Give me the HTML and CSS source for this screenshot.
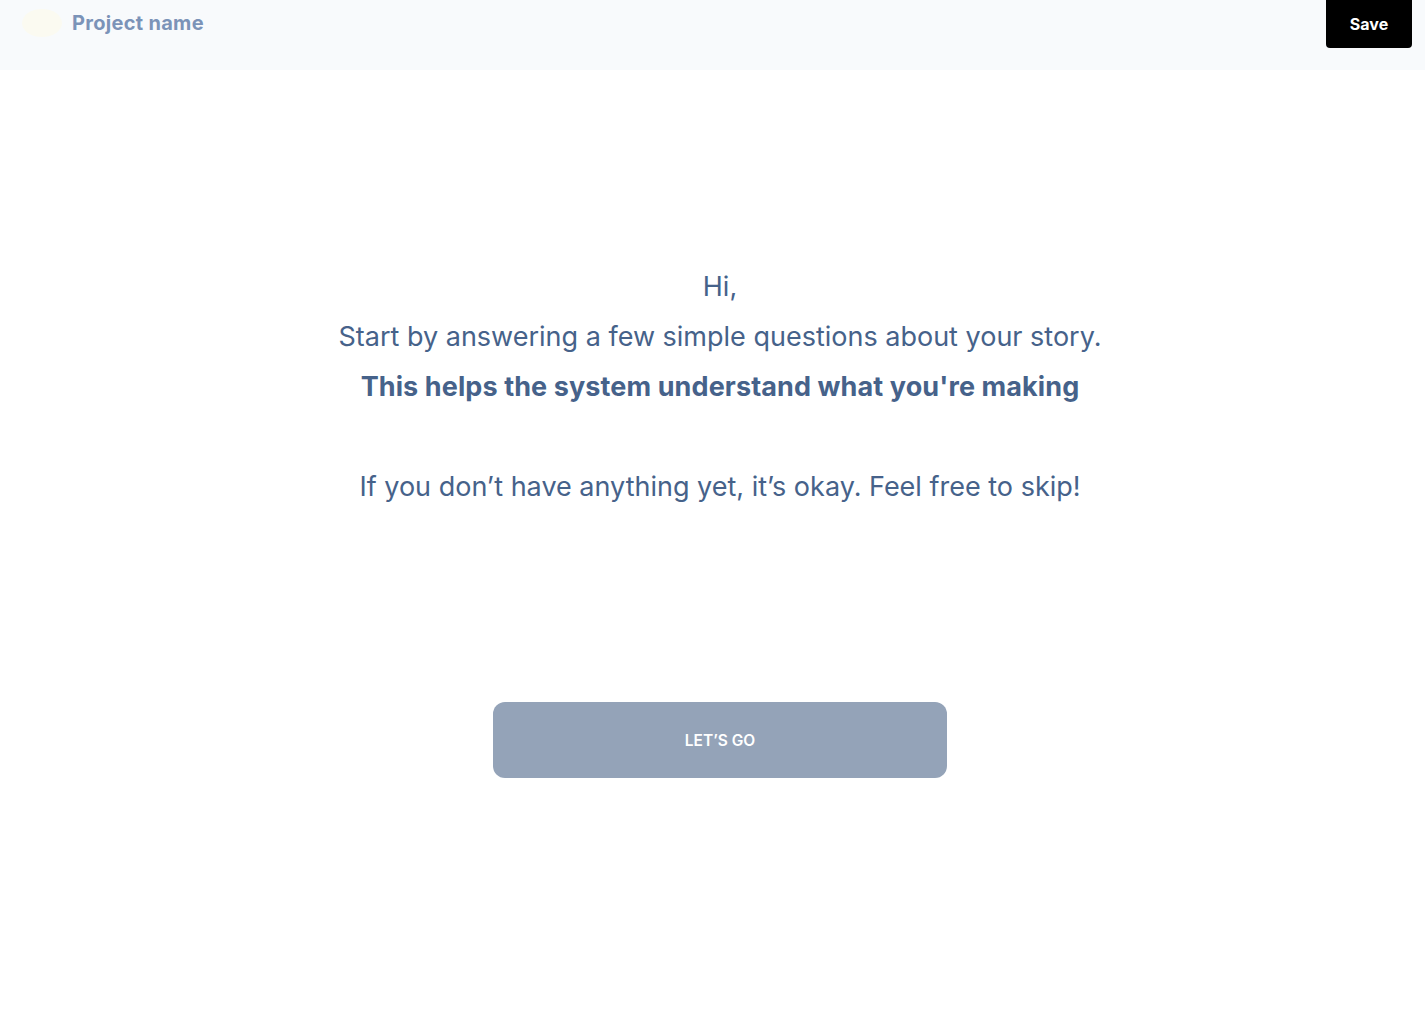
FILE: index.html
```html
<!DOCTYPE html>
<html lang="en">
<head>
<meta charset="utf-8">
<title>Project name</title>
<link rel="stylesheet" href="styles.css">
</head>
<body>
<header class="topbar">
  <div class="brand">
    <span class="logo"></span>
    <span class="project">Project name</span>
  </div>
  <button class="save">Save</button>
</header>
<main class="intro">
  <div class="copy">
    <p class="line">Hi,</p>
    <p class="line">Start by answering a few simple questions about your story.</p>
    <p class="line strong">This helps the system understand what you're making</p>
    <p class="line spacer"></p>
    <p class="line">If you don’t have anything yet, it’s okay. Feel free to skip!</p>
  </div>
  <button class="go">LET’S GO</button>
</main>
</body>
</html>
```
FILE: styles.css
```css
* { box-sizing: border-box; }
html, body { margin: 0; padding: 0; background: #ffffff; }
body { font-family: Inter, "Open Sans", "Liberation Sans", sans-serif; }

.topbar {
  height: 70px;
  background: #f8fafc;
  display: flex;
  justify-content: space-between;
  align-items: flex-start;
  padding-left: 22px;
  padding-right: 13px;
}
.brand { display: flex; align-items: center; gap: 10px; height: 45px; }
.logo {
  width: 40px; height: 28px; border-radius: 50%;
  background: #fbfaf1;
}
.project {
  font-size: 20px; font-weight: 700; color: #7b93b8; letter-spacing: 0.3px;
}
.save {
  border: none; background: #000; color: #fff;
  width: 86px; height: 48px;
  border-radius: 0 0 4px 4px;
  font-family: inherit; font-size: 16px; font-weight: 700;
}

.intro {
  display: flex; flex-direction: column; align-items: center;
  padding-left: 15px;
  padding-top: 192px;
}
.copy { text-align: center; color: #46628a; }
.line {
  margin: 0; height: 50px; line-height: 50px;
  font-size: 27px; font-weight: 400;
}
.strong { font-weight: 700; letter-spacing: 0.1px; }
.go {
  margin-top: 190px;
  width: 454px; height: 76px;
  border: none; border-radius: 12px;
  background: #94a3b8; color: #fff;
  font-family: inherit; font-size: 15.5px; font-weight: 600;
}
```
